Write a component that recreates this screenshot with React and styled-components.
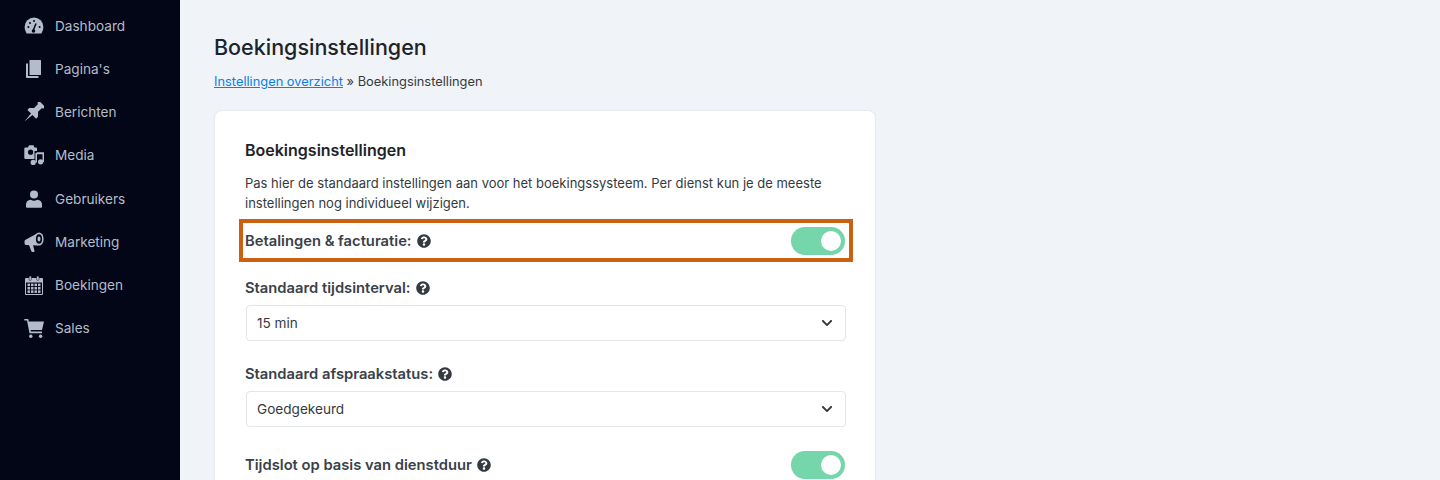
import React from 'react';
import styled, { createGlobalStyle } from 'styled-components';
import { FaQuestionCircle, FaChevronDown } from 'react-icons/fa';

const GlobalStyle = createGlobalStyle`
  html, body {
    margin: 0;
    height: 480px;
    overflow: hidden;
    background: #f0f3f8;
    font-family: Inter, "Liberation Sans", sans-serif;
  }
  * { box-sizing: border-box; }
`;

const Layout = styled.div`
  display: flex;
  height: 480px;
  overflow: hidden;
`;

const Sidebar = styled.nav`
  width: 180px;
  flex-shrink: 0;
  background: #020617;
  padding-top: 4.5px;
  display: flex;
  flex-direction: column;
`;

const NavItem = styled.div`
  display: flex;
  align-items: center;
  height: 43.15px;
  padding-left: 24px;
  color: #b4bccb;
  font-size: 13.6px;
  svg { width: 20px; height: 20px; flex-shrink: 0; fill: currentColor; }
  span { margin-left: 11px; }
`;

const Main = styled.main`
  flex: 1;
  padding: 34px 0 0 34px;
`;

const PageTitle = styled.h1`
  margin: 0;
  font-size: 21.5px;
  line-height: 27px;
  font-weight: 500;
  color: #1e2329;
`;

const Breadcrumb = styled.p`
  margin: 13px 0 20px;
  font-size: 12.85px;
  line-height: 16px;
  color: #343a40;
  a { color: #0d7fe8; text-decoration: underline; }
`;

const Card = styled.section`
  width: 662px;
  height: 460px;
  background: #fff;
  border: 1px solid #e6e9ef;
  border-radius: 8px;
  padding: 28px 30px 0;
`;

const CardTitle = styled.h2`
  margin: 0 0 12px;
  font-size: 16px;
  line-height: 22px;
  font-weight: 600;
  color: #1e2329;
`;

const Description = styled.p`
  margin: 0 0 10px;
  font-size: 13px;
  line-height: 20px;
  color: #343a40;
`;

const ToggleRow = styled.div`
  display: flex;
  align-items: center;
  justify-content: space-between;
  height: ${p => (p.$highlight ? 35 : 36)}px;
  margin-top: ${p => p.$top || 0}px;
  ${p => p.$highlight && `
    margin-left: -2px;
    margin-right: -4px;
    padding: 0 4px 0 2px;
    outline: 4px solid #cd5f10;
  `}
`;

const Label = styled.div`
  display: flex;
  align-items: center;
  gap: 5px;
  font-size: 14.75px;
  line-height: 18px;
  font-weight: 600;
  color: #3a4149;
  svg { width: 14px; height: 14px; color: #343a40; }
`;

const Toggle = styled.div`
  width: 54px;
  height: 28px;
  border-radius: 14px;
  background: #75d5ab;
  display: flex;
  align-items: center;
  justify-content: flex-end;
  padding-right: 4px;
  &::after {
    content: '';
    width: 20px;
    height: 20px;
    border-radius: 50%;
    background: #fff;
  }
`;

const Field = styled.div`
  margin-top: ${p => p.$top}px;
`;

const Select = styled.div`
  display: flex;
  align-items: center;
  justify-content: space-between;
  width: 600px;
  height: 36px;
  margin: 8px 0 0 1px;
  padding: 0 12px 0 10px;
  background: #fff;
  border: 1px solid #e2e5e9;
  border-radius: 4px;
  font-size: 13.6px;
  color: #343a40;
  svg { width: 12px; height: 12px; color: #343a40; }
`;

const HOLE = '#020617';

const DashboardIcon = () => (
  <svg viewBox="0 0 20 20">
    <path d="M2.6 17.4Q.6 14.5.6 11A9.4 9.4 0 0 1 19.4 11Q19.4 14.5 17.4 17.4Z" />
    <g fill={HOLE}>
      <circle cx="4.4" cy="11" r="1" />
      <circle cx="6" cy="7" r="1" />
      <circle cx="10" cy="5" r="1" />
      <circle cx="15.6" cy="11" r="1" />
      <circle cx="9.5" cy="15" r="1.8" />
    </g>
    <path d="M9 15L12 7.5" stroke={HOLE} strokeWidth="1.5" />
  </svg>
);

const PagesIcon = () => (
  <svg viewBox="0 0 20 20">
    <path d="M2 4.5H4V17H14.5V19H2.8Q2 19 2 18.2Z" />
    <rect x="5.5" y="1" width="11.5" height="15" rx="0.6" />
  </svg>
);

const PinIcon = () => (
  <svg viewBox="0 0 20 20">
    <path
      transform="rotate(45 10 10)"
      d="M5.8 -1.5H14.2V.8L12.8 1.8V7L16.2 10.6V13.2H11L10 23.5L9 13.2H3.8V10.6L7.2 7V1.8L5.8 .8Z"
    />
  </svg>
);

const MediaIcon = () => (
  <svg viewBox="0 0 20 20">
    <path
      fillRule="evenodd"
      d="M1.5 2.5H4L5 .3H9.5L10.5 2.5H12Q13 2.5 13 3.5V6H10.5V14H1.5Q.3 14 .3 13V3.5Q.3 2.5 1.5 2.5ZM6.6 4.6A2.6 2.6 0 1 0 6.6 9.8A2.6 2.6 0 1 0 6.6 4.6Z"
    />
    <path d="M11.4 8.2L13.3 7.2H20V17H18.5V9.2H13V17.5H11.4Z" />
    <circle cx="9.2" cy="17.4" r="2.6" />
    <circle cx="16.6" cy="16.8" r="2.6" />
  </svg>
);

const UserIcon = () => (
  <svg viewBox="0 0 20 20">
    <circle cx="10" cy="5.6" r="4" />
    <path d="M2 18V15.5Q2 11.5 6.8 10.8Q10 12.6 13.2 10.8Q18 11.5 18 15.5V18Q18 18.8 17 18.8H3Q2 18.8 2 18Z" />
  </svg>
);

const MegaphoneIcon = () => (
  <svg viewBox="0 0 20 20">
    <path d="M2 7.5L14 1V13.5L2 13Q.5 13 .5 11V9.5Q.5 8 2 7.5Z" />
    <path d="M5 13H9L10.5 19Q10.7 20 9.6 20H8.6Q7.5 20 7.3 19Z" />
    <ellipse cx="15" cy="7" rx="4.6" ry="6.6" />
    <ellipse cx="15" cy="7" rx="3.1" ry="4.8" fill={HOLE} />
    <ellipse cx="15" cy="7" rx="1.5" ry="2.4" />
  </svg>
);

const CalendarIcon = () => (
  <svg viewBox="0 0 20 20">
    <path
      fillRule="evenodd"
      d="M2 3H18Q19 3 19 4V19Q19 20 18 20H2Q1 20 1 19V4Q1 3 2 3ZM2 7.5V19H18V7.5Z"
    />
    <rect x="5" y="1" width="2.4" height="4.5" rx="1.2" stroke={HOLE} strokeWidth="0.5" />
    <rect x="12.6" y="1" width="2.4" height="4.5" rx="1.2" stroke={HOLE} strokeWidth="0.5" />
    {[8.6, 12, 15.4].map(y =>
      [3.5, 7, 10.5, 14].map(x => <rect key={`${x}-${y}`} x={x} y={y} width="2.5" height="2.5" />)
    )}
  </svg>
);

const CartIcon = () => (
  <svg viewBox="0 0 20 20">
    <path d="M.3 1H4.2L4.8 3.6H20L18 12H6.6L6.9 13.6H18V15.2H5.5L3 2.6H.3Z" />
    <circle cx="6.8" cy="18.3" r="1.7" />
    <circle cx="16.6" cy="18.3" r="1.7" />
  </svg>
);

const navItems = [
  { label: 'Dashboard', icon: DashboardIcon },
  { label: "Pagina's", icon: PagesIcon },
  { label: 'Berichten', icon: PinIcon },
  { label: 'Media', icon: MediaIcon },
  { label: 'Gebruikers', icon: UserIcon },
  { label: 'Marketing', icon: MegaphoneIcon },
  { label: 'Boekingen', icon: CalendarIcon },
  { label: 'Sales', icon: CartIcon },
];

export default function App() {
  return (
    <Layout>
      <GlobalStyle />
      <Sidebar>
        {navItems.map(item => (
          <NavItem key={item.label}>
            <item.icon />
            <span>{item.label}</span>
          </NavItem>
        ))}
      </Sidebar>
      <Main>
        <PageTitle>Boekingsinstellingen</PageTitle>
        <Breadcrumb>
          <a href="#overzicht">Instellingen overzicht</a> » Boekingsinstellingen
        </Breadcrumb>
        <Card>
          <CardTitle>Boekingsinstellingen</CardTitle>
          <Description>
            Pas hier de standaard instellingen aan voor het boekingssysteem. Per dienst kun je de meeste
            instellingen nog individueel wijzigen.
          </Description>
          <ToggleRow $highlight>
            <Label>Betalingen &amp; facturatie: <FaQuestionCircle /></Label>
            <Toggle />
          </ToggleRow>
          <Field $top={21}>
            <Label>Standaard tijdsinterval: <FaQuestionCircle /></Label>
            <Select>15 min <FaChevronDown /></Select>
          </Field>
          <Field $top={24}>
            <Label>Standaard afspraakstatus: <FaQuestionCircle /></Label>
            <Select>Goedgekeurd <FaChevronDown /></Select>
          </Field>
          <ToggleRow $top={20}>
            <Label>Tijdslot op basis van dienstduur <FaQuestionCircle /></Label>
            <Toggle />
          </ToggleRow>
        </Card>
      </Main>
    </Layout>
  );
}
